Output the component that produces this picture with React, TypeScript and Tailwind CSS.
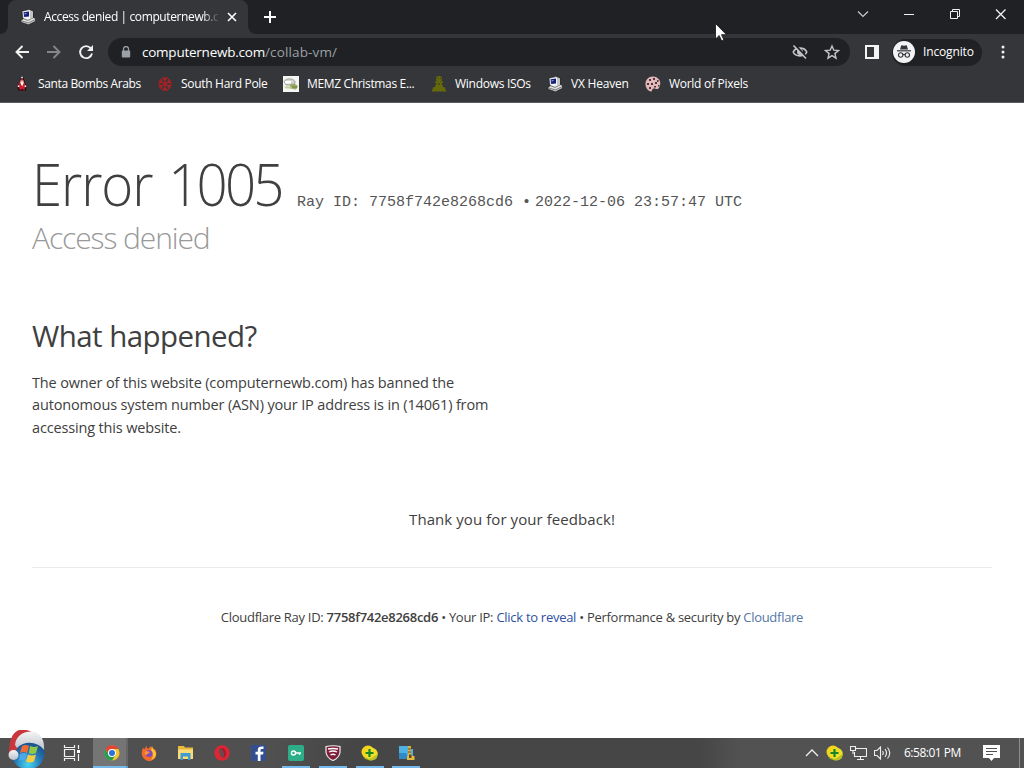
import React from "react";

const ui = "font-['Open_Sans','Noto_Sans',sans-serif]";

function ComputerIcon() {
  return (
    <svg width="16" height="16" viewBox="0 0 16 16" className="shrink-0">
      <path d="M1 11.500 3.500 9.500 14 8.500l1.500 1.500v2.200L8.500 15.700 1 13.200z" fill="#dcdcdc" stroke="#111" strokeWidth=".6" />
      <path d="M1.500 12 8.500 13.900l6.600-3.200" stroke="#555" fill="none" strokeWidth=".7" />
      <path d="M2 2.200 9 .6l4 1.700v6.500L8 11.300 3 9.500z" fill="#f4f4f4" stroke="#111" strokeWidth=".5" />
      <path d="M10 1.800 13 2.700v6l-3 1.500z" fill="#c4c4c4" />
      <path d="M3.500 3.300 9 2.500v5L4.200 8z" fill="#16207c" />
      <path d="M4.500 4.200 6.500 3.900v1.200l-2 .3z" fill="#8fa0ea" />
    </svg>
  );
}

function SantaIcon() {
  return (
    <svg width="16" height="16" viewBox="0 0 16 16" className="shrink-0">
      <path d="M4.500 15 3.500 11l2-5 1.500-4 2-1.500 1.500 4 2 6-.5 4.500z" fill="#191012" />
      <path d="M5.500 6 8 1.500l2 4 2 5-1.500 2.500H5.500L4 10z" fill="#c51f2d" />
      <path d="M6.500 4.500h3v2.500h-3z" fill="#efc7b0" />
      <path d="M6.200 6.500h3.600L8.200 10.500zM7.300.800h1.500v1.500H7.300zM3.800 9.500h1.500V11H3.800zM10.700 9.500h1.500V11h-1.500z" fill="#fff" />
      <path d="M5.500 13h2v2h-2zM9 13h2v2H9z" fill="#761722" />
    </svg>
  );
}

function SnowflakeIcon() {
  return (
    <svg width="16" height="16" viewBox="0 0 16 16" className="shrink-0" stroke="#ae2024" strokeWidth="1.400" fill="none">
      <path d="M8 1v14M2 4.500l12 7M14 4.500l-12 7M5.500 1.500 8 4l2.500-2.500M5.500 14.500 8 12l2.500 2.500M1.500 7 5 6.200 4 2.800M14.500 9 11 9.800l1 3.400M1.500 9 5 9.800l-1 3.400M14.500 7 11 6.200l1-3.400" />
    </svg>
  );
}

function MemzIcon() {
  return (
    <svg width="16" height="16" viewBox="0 0 16 16" className="shrink-0">
      <path d="M0 0h16v16H0z" fill="#f5f5f1" />
      <path d="M1 5.500C3 2 10 2 12 5.500l-.5 3.500L3 9z" fill="#d4d6d2" stroke="#888" strokeWidth=".8" />
      <path d="M2 5h6v2.500H2z" fill="#fff" />
      <path d="M7 8.500c2-2 6-1 8 2l-2 3-6-1z" fill="#9cac68" />
      <path d="M1 10.500h6l3 2H3z" fill="#c3cb99" />
      <path d="M9 11h5" stroke="#6b8038" />
    </svg>
  );
}

function PawnIcon() {
  return (
    <svg width="16" height="16" viewBox="0 0 16 16" className="shrink-0" fill="#66690a">
      <circle cx="8" cy="3" r="3" />
      <path d="M4 5.500h8v1.500h-1.500l1.500 4h1.500l2 4.500h-15l2-4.500H4l1.500-4H4z" />
      <path d="M6.500 2h1v1h-1zM9 2h1v1H9zM7.500 7h1v2h-1z" fill="#343524" />
    </svg>
  );
}

function PixelsIcon() {
  return (
    <svg width="16" height="16" viewBox="0 0 16 16" className="shrink-0">
      <path d="M8 .500C3.500.500.500 4 .500 8S3 14.500 5.500 15.500c2 .5 1-2.500 3-3 2-.5 3 1.500 5 0C15.500 10 16 6 14 3.500 12.500 1.500 10.500.500 8 .500z" fill="#e2b7ba" />
      <path d="M4 3h2v2H4zM8 2h2v2H8zM12 4h1.500v2H12zM2 7h2v2H2zM6 7h2v2H6zM10 6h2v2h-2zM4 11h2v2H4zM9 10h2v1.500H9zM13 9h1.500v1.500H13z" fill="#503638" />
    </svg>
  );
}

const bookmarks = [
  { label: "Santa Bombs Arabs", icon: <SantaIcon />, box: "w-[143px]", text: "tracking-[-0.37px]" },
  { label: "South Hard Pole", icon: <SnowflakeIcon />, box: "w-[126px]", text: "tracking-[-0.3px]" },
  { label: "MEMZ Christmas E...", icon: <MemzIcon />, box: "w-[148px]", text: "tracking-[-0.34px]" },
  { label: "Windows ISOs", icon: <PawnIcon />, box: "w-[116px]", text: "tracking-[-0.28px]" },
  { label: "VX Heaven", icon: <ComputerIcon />, box: "w-[98px]", text: "tracking-[-0.22px]" },
  { label: "World of Pixels", icon: <PixelsIcon />, box: "w-[120px]", text: "tracking-[-0.28px]" },
];

function TabStrip() {
  return (
    <div className="flex h-[34px] bg-[#202124]">
      <svg width="8" height="8" viewBox="0 0 8 8" className="shrink-0 self-end" fill="#35363a">
        <path d="M8 0v8H0a8 8 0 0 0 8-8z" />
      </svg>
      <div className="flex h-full w-[240px] shrink-0 items-center rounded-t-lg bg-[#35363a] pl-3">
        <ComputerIcon />
        <div className="ml-2 w-[174px] whitespace-nowrap text-[12px] tracking-[-0.39px] text-white [mask-image:linear-gradient(to_right,black_158px,transparent_176px)]">
          Access denied | computernewb.c
        </div>
        <svg width="10" height="10" viewBox="0 0 10 10" className="ml-[9px] shrink-0" stroke="#fff" strokeWidth="1.600">
          <path d="M1 1l8 8M9 1 1 9" />
        </svg>
      </div>
      <svg width="8" height="8" viewBox="0 0 8 8" className="shrink-0 self-end" fill="#35363a">
        <path d="M0 0v8h8a8 8 0 0 1-8-8z" />
      </svg>
      <svg width="12" height="12" viewBox="0 0 12 12" className="mt-[11px] ml-2 shrink-0" stroke="#fff" strokeWidth="2">
        <path d="M6 0v12M0 6h12" />
      </svg>
      <div className="ml-auto flex items-start pt-[8px] pr-[14px]">
        <svg width="161" height="12" viewBox="0 0 161 12" fill="none" stroke="#f1f1f1" strokeWidth="1">
          <path d="M9 3.500 14 8.500l5-5" stroke="#ccc" strokeWidth="1.200" />
          <path d="M55 6.500h10" />
          <path d="M101.500 3.500h7v7h-7zM103.500 3.500v-2h7v7h-2" />
          <path d="M147 1.500l9.500 9.500M156.500 1.500 147 11" strokeWidth="1.300" />
        </svg>
      </div>
    </div>
  );
}

function Toolbar() {
  return (
    <div className="flex h-9 items-center bg-[#35363a] pl-[15px]">
      <svg width="80" height="16" viewBox="0 0 80 16" className="shrink-0" fill="none" strokeWidth="1.900">
        <path d="M14 8H1.500M7.500 2l-6 6 6 6" stroke="#f1f1f1" />
        <path d="M32 8h12.500M38.500 2l6 6-6 6" stroke="#85868a" />
        <path d="M75.800 4.300A6 6 0 1 0 77 9.500" stroke="#f1f1f1" />
        <path d="M78 1v6h-6z" fill="#f1f1f1" />
      </svg>
      <div className="ml-[13px] flex h-7 w-[742px] shrink-0 items-center rounded-full bg-[#202124] pl-[13px]">
        <svg width="10" height="12" viewBox="0 0 10 12" className="shrink-0">
          <path d="M2.500 5V3a2.500 2.500 0 0 1 5 0v2" fill="none" stroke="#9aa0a6" strokeWidth="1.300" />
          <rect x=".8" y="4.500" width="8.400" height="7" rx="1" fill="#9aa0a6" />
        </svg>
        <div className="ml-[11px] whitespace-nowrap text-[13.500px] text-[#9aa0a6]">
          <span className="tracking-[-0.24px] text-white">computernewb.com</span>
          <span className="tracking-[0.15px]">/collab-vm/</span>
        </div>
        <svg width="48" height="16" viewBox="0 0 48 16" className="mr-[10px] ml-auto shrink-0" fill="none" stroke="#c4c6c9" strokeWidth="1.600">
          <path d="M1.200 8C3.500 2.800 12.500 2.800 14.800 8c-2.300 5.200-11.300 5.200-13.600 0z" />
          <circle cx="8" cy="8" r="2.200" fill="#c4c6c9" />
          <path d="M3 1l12 12.500" stroke="#202124" strokeWidth="2" />
          <path d="M1.500 1.500 14 14.500" />
          <path d="M40 2l1.800 4.200 4.700.4-3.600 3 1.100 4.600-4-2.500-4 2.500 1.100-4.600-3.600-3 4.700-.4z" strokeWidth="1.400" />
        </svg>
      </div>
      <svg width="14" height="14" viewBox="0 0 14 14" className="ml-[15px] shrink-0">
        <path d="M0 0h14v14H0z" fill="#f4f4f4" />
        <path d="M2 2h7v10H2z" fill="#35363a" />
      </svg>
      <div className="ml-[13px] flex h-[27px] w-[90px] shrink-0 items-center rounded-full bg-[#202124] pl-px">
        <svg width="22" height="22" viewBox="0 0 22 22" className="shrink-0">
          <circle cx="11" cy="11" r="11" fill="#f1f3f4" />
          <path d="M7 8.500 8.300 4.300l2.700.5 2.700-.5L15 8.500z" fill="#35363a" />
          <path d="M4 9.800h14" stroke="#35363a" strokeWidth="1.200" />
          <g fill="none" stroke="#35363a" strokeWidth="1.100">
            <circle cx="7.700" cy="14" r="2.200" />
            <circle cx="14.300" cy="14" r="2.200" />
            <path d="M9.900 13.700q1.100-.7 2.200 0" />
          </g>
        </svg>
        <span className="ml-[8px] text-[12px] tracking-[-0.15px] text-white">Incognito</span>
      </div>
      <svg width="4" height="16" viewBox="0 0 4 16" className="ml-[19px] shrink-0" fill="#f1f1f1">
        <circle cx="2" cy="3" r="1.500" />
        <circle cx="2" cy="8" r="1.500" />
        <circle cx="2" cy="13" r="1.500" />
      </svg>
    </div>
  );
}

function BookmarksBar() {
  return (
    <div className="flex h-[33px] items-start border-b border-[#5b5c5f] bg-[#35363a] pt-[5px] pl-[14px]">
      {bookmarks.map((b) => (
        <div key={b.label} className={`flex h-[18px] shrink-0 items-center gap-2 whitespace-nowrap text-[12px] text-white ${b.box}`}>
          {b.icon}
          <span className={b.text}>{b.label}</span>
        </div>
      ))}
    </div>
  );
}

function ErrorPage() {
  return (
    <main className="flex-1 overflow-hidden bg-white px-8 text-[#404040]">
      <div className="mt-[50px] flex h-[60px] items-baseline whitespace-nowrap">
        <h1 className="w-[250px] origin-left scale-x-[0.925] text-[59px] leading-[60px] font-light tracking-[-1.2px]">
          Error <span className="ml-[3px] tracking-[-3px]">1005</span>
        </h1>
        <span className="ml-[15px] font-['Liberation_Mono',monospace] text-[15px] text-[#555]">Ray ID: 7758f742e8268cd6</span>
        <span className="ml-[9px] font-['Liberation_Mono',monospace] text-[15px] text-[#555]">
          <span className="mr-[5px] inline-block w-2 text-center text-[15px]">•</span>2022-12-06 23:57:47 UTC
        </span>
      </div>
      <h2 className="mt-[5px] text-[30px] leading-[39px] font-light tracking-[-1.1px] text-[#999]">Access denied</h2>
      <h2 className="mt-[59px] text-[29.500px] leading-[39px] tracking-[-0.55px]">What happened?</h2>
      <p className="mt-[17px] text-[14.500px] leading-[22.400px] tracking-[-0.15px] whitespace-nowrap">
        The owner of this website (computernewb.com) has banned the
        <br />
        autonomous system number (ASN) your IP address is in (14061) from
        <br />
        accessing this website.
      </p>
      <p className="mt-[67.300px] text-center text-[15px] leading-6 tracking-[0.07px]">Thank you for your feedback!</p>
      <div className="mt-[36px] border-t border-[#ebebeb] pt-[39px] text-center text-[13px] leading-[20px] tracking-[-0.28px] whitespace-nowrap">
        Cloudflare Ray ID: <span className="font-semibold">7758f742e8268cd6</span> • Your IP:{" "}
        <a className="text-[#2f4f9f]">Click to reveal</a> • Performance &amp; security by <a className="text-[#5576a6]">Cloudflare</a>
      </div>
    </main>
  );
}

function StartOrb() {
  return (
    <svg width="40" height="38" viewBox="0 0 40 38" className="absolute bottom-0 left-[7px]">
      <defs>
        <radialGradient id="orb" cx=".5" cy=".85" r=".8">
          <stop offset="0" stopColor="#49d5f2" />
          <stop offset=".5" stopColor="#2677b5" />
          <stop offset="1" stopColor="#123e75" />
        </radialGradient>
        <linearGradient id="fur" x1="0" y1="0" x2="0" y2="1">
          <stop offset="0" stopColor="#f4f5f7" />
          <stop offset="1" stopColor="#bcc1c9" />
        </linearGradient>
      </defs>
      <circle cx="21" cy="23" r="16.500" fill="url(#orb)" />
      <path d="M15 16q4-2 7 0l-2 7q-3-2-7 0z" fill="#ee6a35" />
      <path d="M23 16q4 2 8 0l-2 7q-4 2-7 0z" fill="#93c846" />
      <path d="M13 24q4-2 7 0l-2 7q-3-2-6 0z" fill="#4ba8ea" />
      <path d="M21 24.500q4 2 8 0l-2 7q-4 2-8 0z" fill="#f6cd3e" />
      <path d="M2 24C2 10 5 3 12 0c7-1 12 1 16 4L13 11 8 24z" fill="#c8373c" />
      <path d="M8 15C9 4 20 0 28 2c6 2 10 9 9 18C32 13 19 9 10 18z" fill="url(#fur)" />
      <circle cx="6.500" cy="25" r="5" fill="url(#fur)" />
    </svg>
  );
}

function AntivirusIcon() {
  return (
    <svg width="17" height="16" viewBox="0 0 17 16">
      <circle cx="7" cy="7" r="6.500" fill="#f4d51c" />
      <circle cx="10.500" cy="9" r="6.200" fill="#f0df28" />
      <path d="M2 12q5 3 9 1l5.500-4q.5 4-2.500 5.500-4 2-7 .2-3-.2-5-2.700z" fill="#b7c325" />
      <path d="M8.500 4v8M4.500 8h8" stroke="#188428" strokeWidth="2.200" />
    </svg>
  );
}

const apps = [
  {
    name: "chrome",
    active: true,
    running: true,
    icon: (
      <svg width="16" height="16" viewBox="0 0 16 16">
        <circle cx="8" cy="8" r="7.500" fill="#f5c52c" />
        <path d="M1.500 4A7.500 7.500 0 0 1 14.500 4H8a4 4 0 0 0-3.500 6z" fill="#e24535" />
        <path d="M1.500 4A7.500 7.500 0 0 0 8 15.500L11.500 10 4.500 10z" fill="#249d50" />
        <circle cx="8" cy="8" r="4" fill="#fff" />
        <circle cx="8" cy="8" r="3" fill="#2b72d6" />
      </svg>
    ),
  },
  {
    name: "firefox",
    icon: (
      <svg width="16" height="16" viewBox="0 0 16 16">
        <path d="M2 3l2 1 1-3 2 3 3-3c0 2 2 2 3 4l1-1c4 8-2 12-6 12S-2 11 2 3z" fill="#f36b2b" />
        <path d="M11 1c1 4 4 4 4 8 0 3-2 5-5 6 3-4 2-7 0-9z" fill="#ffc331" />
        <circle cx="8" cy="8.500" r="3.500" fill="#804bbd" />
        <path d="M4 7c2-2 3 0 5 0-1 2-3 1-3 3-2 0-3-2-2-3z" fill="#ff9538" />
      </svg>
    ),
  },
  {
    name: "explorer",
    icon: (
      <svg width="17" height="16" viewBox="0 0 17 16">
        <path d="M1 1h6l1 1.500h8V14H1z" fill="#e9b93b" />
        <path d="M1 4.500h15V14H1z" fill="#fadb77" />
        <path d="M3.500 8h10v7H11v-3.500H6V15H3.500z" fill="#3f9bd1" />
      </svg>
    ),
  },
  {
    name: "opera",
    icon: (
      <svg width="16" height="16" viewBox="0 0 16 16">
        <circle cx="8" cy="8" r="7.700" fill="#dc2636" />
        <ellipse cx="8" cy="8" rx="2.500" ry="5" fill="#6a4a4c" transform="rotate(-20 8 8)" />
        <path d="M6.500 3.500c6-2 8 8 2.500 9.500 2-3 1-8-2.500-9.500z" fill="#a81a28" />
      </svg>
    ),
  },
  {
    name: "facebook",
    icon: (
      <svg width="16" height="16" viewBox="0 0 16 16">
        <rect width="15" height="16" rx="1" fill="#344f91" />
        <path d="M9.500 16V9.500h2.600l.4-2.700h-3V5.200c0-.9.4-1.300 1.500-1.300h1.500V1.500C9 1 6.800 2 6.800 5v1.800H4.500v2.700h2.300V16z" fill="#fff" />
      </svg>
    ),
  },
  {
    name: "vpn",
    running: true,
    icon: (
      <svg width="16" height="16" viewBox="0 0 16 16">
        <rect width="16" height="16" rx="2" fill="#2cae89" />
        <circle cx="5.500" cy="8" r="2" fill="none" stroke="#fff" strokeWidth="1.400" />
        <path d="M7.500 8H13M11.500 8v2" stroke="#fff" strokeWidth="1.400" />
      </svg>
    ),
  },
  {
    name: "shield",
    running: true,
    icon: (
      <svg width="16" height="16" viewBox="0 0 16 16">
        <path d="M1 1.500q7-1.500 14 0v6Q14 13 8 15.500 2 13 1 7.500z" fill="#7e1e39" stroke="#eee" strokeWidth="1.200" />
        <path d="M3 4q5-1 10 0M4 7q4-2 8 0M5.500 10q2.500-1.500 5 0" fill="none" stroke="#fff" strokeWidth="1.300" />
      </svg>
    ),
  },
  { name: "antivirus", running: true, icon: <AntivirusIcon /> },
  {
    name: "installer",
    running: true,
    icon: (
      <svg width="17" height="16" viewBox="0 0 17 16">
        <path d="M1 1h9l3 3h2v10H1z" fill="#4fb0e2" />
        <path d="M1 8h7l2 6H1z" fill="#2f8ac6" />
        <path d="M10 1h3v13h-3z" fill="#d9b33a" />
        <path d="M10 4h3M10 7h3" stroke="#704822" />
        <path d="M9 11h7.500v4H9z" fill="#e0bd3c" />
        <path d="M11 9.500h2.500V13H11z" fill="#7c3c24" />
      </svg>
    ),
  },
];

function Taskbar() {
  return (
    <footer className="relative flex h-[30px] shrink-0 items-stretch bg-[linear-gradient(to_right,#505050_270px,#464646_350px,#464646_700px,#525252_740px)] pl-[63px]">
      <StartOrb />
      <div className="flex w-[30px] items-center">
        <svg width="17" height="16" viewBox="0 0 17 16" fill="none" stroke="#f3f3f3" strokeWidth="1.200">
          <path d="M1.500 4.500h10v7h-10zM1.500 0v2.500h10V0M1.500 16v-2.500h10V16M15.500 0v4M15.500 9v7" />
          <path d="M14 5h3v3h-3z" fill="#fff" stroke="none" />
        </svg>
      </div>
      {apps.map((app) => (
        <div key={app.name} className="flex w-[36.800px]">
          <div className={`flex w-[33px] flex-col items-center pl-[5px] ${app.active ? "bg-[#757575]" : ""}`}>
            <div className="flex h-7 items-center pt-[2px]">{app.icon}</div>
            {app.running && <div className={`h-[2px] bg-[#76b9ed] ${app.active ? "-ml-[5px] w-[33px]" : "w-7"}`} />}
          </div>
          {app.active && (
            <div className="flex w-[2px] flex-col justify-end bg-[#666]">
              <div className="h-[2px] bg-[#5f9dcc]" />
            </div>
          )}
        </div>
      ))}
      <div className="ml-auto flex items-center">
        <svg width="14" height="8" viewBox="0 0 14 8" fill="none" stroke="#eee" strokeWidth="1.300">
          <path d="M1 7l6-6 6 6" />
        </svg>
        <div className="ml-[7px]">
          <AntivirusIcon />
        </div>
        <svg width="17" height="15" viewBox="0 0 17 15" className="ml-[7px]" fill="none" stroke="#eee" strokeWidth="1.100">
          <path d="M6 2.500h10.500v8H4.500V6M10.500 10.500v3M7 13.500h7M.5.500h5v4h-5zM3 4.500v3.500" />
        </svg>
        <svg width="17" height="14" viewBox="0 0 17 14" className="ml-[7px]" fill="none" stroke="#eee" strokeWidth="1.100">
          <path d="M.5 4.500h2.500l3.500-3.500v12L3 9.500H.5zM8.500 5q1.500 2 0 4M11 3.200q3 3.800 0 7.600M13.500 1.500q4.500 5.500 0 11" />
        </svg>
        <span className="ml-[13px] w-[58px] text-[12px] tracking-[-0.5px] whitespace-nowrap text-white">6:58:01 PM</span>
        <svg width="17" height="16" viewBox="0 0 17 16" className="ml-[21px]">
          <path d="M0 0h17v13h-6l-2.500 3L6 13H0z" fill="#fff" />
          <path d="M3 3.500h11M3 6.500h11M3 9.500h7" stroke="#505050" />
        </svg>
        <div className="ml-[19px] h-[30px] w-[5px] border-l border-[#8d8d8d]" />
      </div>
    </footer>
  );
}

function Cursor() {
  return (
    <svg width="12" height="19" viewBox="0 0 12 19" className="absolute top-[23px] left-[715px]">
      <path d="M.5.500v15.500l3.700-3.500 2.500 5.500 2.200-1-2.400-5.300h5z" fill="#fff" stroke="#111" strokeWidth=".8" />
    </svg>
  );
}

export default function App() {
  return (
    <div className={`relative flex h-[768px] w-[1024px] flex-col overflow-hidden ${ui}`}>
      <TabStrip />
      <Toolbar />
      <BookmarksBar />
      <ErrorPage />
      <Taskbar />
      <Cursor />
    </div>
  );
}
